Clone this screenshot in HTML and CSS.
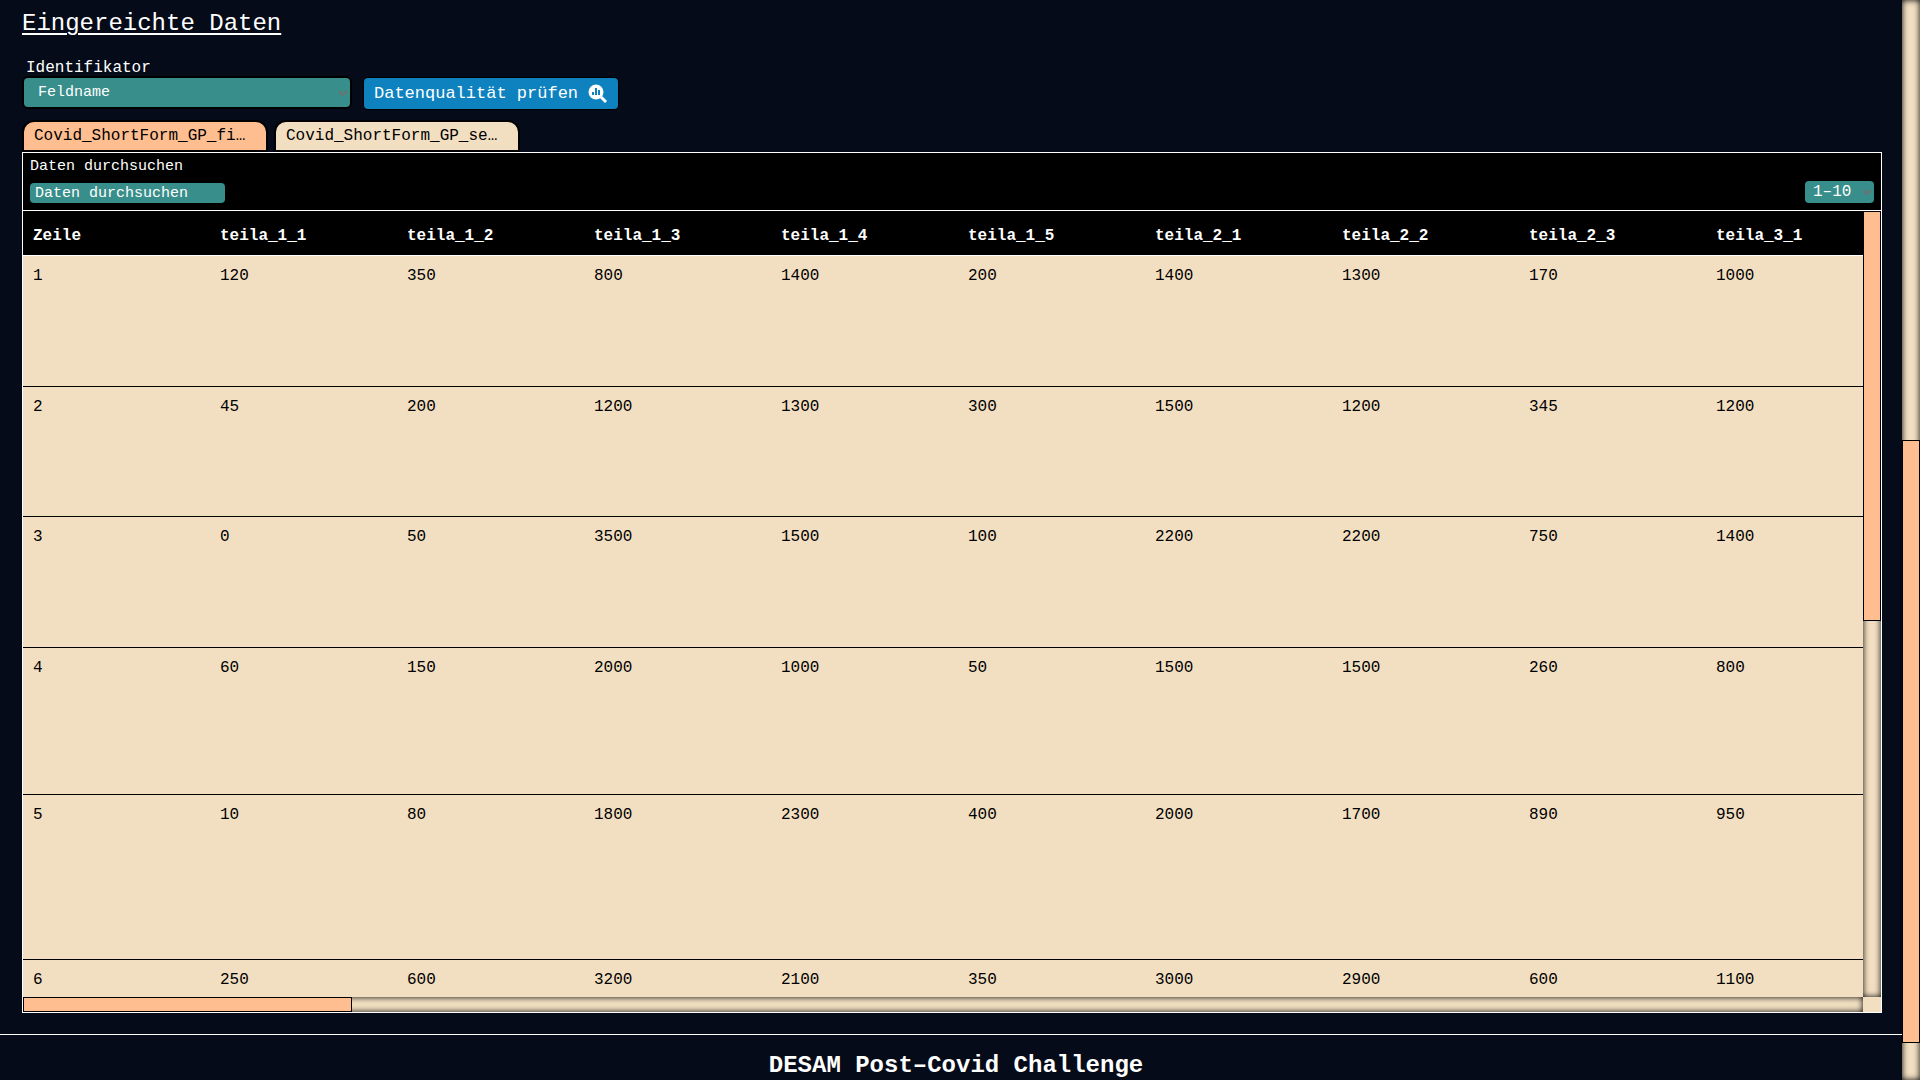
FILE: index.html
```html
<!DOCTYPE html>
<html lang="de">
<head>
<meta charset="utf-8">
<meta name="viewport" content="width=device-width, initial-scale=1">
<title>DESAM Post-Covid Challenge</title>
<link rel="stylesheet" href="styles.css">
</head>
<body>
<div class="page">
  <main class="content">
    <h1 class="title">Eingereichte Daten</h1>

    <form class="toolbar">
      <div class="field">
        <label class="field-label" for="identifier">Identifikator</label>
        <div class="select-wrap">
          <select id="identifier" class="control"><option>Feldname</option></select>
          <svg class="chevron" viewBox="0 0 10 6" aria-hidden="true"><path d="M1 1l4 4 4-4"/></svg>
        </div>
      </div>
      <button class="check-button" type="button">Datenqualität prüfen
        <svg class="check-icon" viewBox="0 0 20 20" aria-hidden="true">
          <path class="handle" d="M13 13l5 5"/>
          <circle class="lens" cx="8" cy="8" r="7.5"/>
          <path class="bars" d="M5 8v3M8 4v7M11 6v5"/>
        </svg>
      </button>
    </form>

    <div class="tabs" role="tablist">
      <button class="tab tab-active" type="button" role="tab" aria-selected="true">Covid_ShortForm_GP_fi…</button>
      <button class="tab" type="button" role="tab" aria-selected="false">Covid_ShortForm_GP_se…</button>
    </div>

    <section class="panel">
      <div class="panel-head">
        <div class="search">
          <label for="search">Daten durchsuchen</label>
          <input id="search" class="control control-small" type="text" placeholder="Daten durchsuchen">
        </div>
        <div class="select-wrap range">
          <select class="control control-small" aria-label="Zeilenbereich"><option>1–10</option></select>
          <svg class="chevron" viewBox="0 0 10 6" aria-hidden="true"><path d="M1 1l4 4 4-4"/></svg>
        </div>
      </div>
      <div class="viewport">
        <div class="table-clip">
          <table class="data">
            <thead>
              <tr><th>Zeile</th><th>teila_1_1</th><th>teila_1_2</th><th>teila_1_3</th><th>teila_1_4</th><th>teila_1_5</th><th>teila_2_1</th><th>teila_2_2</th><th>teila_2_3</th><th>teila_3_1</th></tr>
            </thead>
            <tbody>
              <tr><td>1</td><td>120</td><td>350</td><td>800</td><td>1400</td><td>200</td><td>1400</td><td>1300</td><td>170</td><td>1000</td></tr>
              <tr><td>2</td><td>45</td><td>200</td><td>1200</td><td>1300</td><td>300</td><td>1500</td><td>1200</td><td>345</td><td>1200</td></tr>
              <tr><td>3</td><td>0</td><td>50</td><td>3500</td><td>1500</td><td>100</td><td>2200</td><td>2200</td><td>750</td><td>1400</td></tr>
              <tr class="row-tall"><td>4</td><td>60</td><td>150</td><td>2000</td><td>1000</td><td>50</td><td>1500</td><td>1500</td><td>260</td><td>800</td></tr>
              <tr class="row-taller"><td>5</td><td>10</td><td>80</td><td>1800</td><td>2300</td><td>400</td><td>2000</td><td>1700</td><td>890</td><td>950</td></tr>
              <tr><td>6</td><td>250</td><td>600</td><td>3200</td><td>2100</td><td>350</td><td>3000</td><td>2900</td><td>600</td><td>1100</td></tr>
            </tbody>
          </table>
        </div>
        <div class="track track-y" aria-hidden="true"><div class="thumb thumb-table-y"></div></div>
        <div class="track" aria-hidden="true"><div class="thumb thumb-table-x"></div></div>
        <div class="corner"></div>
      </div>
    </section>
  </main>
  <footer class="footer">DESAM Post–Covid Challenge</footer>
</div>
<div class="track track-page" aria-hidden="true"><div class="thumb thumb-page"></div></div>
</body>
</html>
```
FILE: styles.css
```css
* { box-sizing: border-box; }

body {
  margin: 0;
  height: 100vh;
  overflow: hidden;
  display: grid;
  grid-template-columns: minmax(0, 1fr) 18px;
  grid-template-rows: 100vh;
  background: #050b18;
  color: #fff;
  font: 16px/20px "Liberation Mono", "DejaVu Sans Mono", monospace;
}

button, input, select { font: inherit; color: inherit; margin: 0; }

.page { overflow: hidden; }

.content { padding: 9px 20px 21px 22px; }

.title {
  margin: 0;
  font-size: 24px;
  line-height: 30px;
  font-weight: 400;
  text-decoration: underline;
  text-decoration-thickness: 2px;
  text-underline-offset: 3px;
}

.toolbar {
  display: flex;
  align-items: flex-end;
  gap: 14px;
  margin: 19px 0 0 2px;
}

.field { width: 326px; display: flex; flex-direction: column; padding-bottom: 2px; }
.field-label { padding-left: 2px; }

.select-wrap { display: grid; align-items: center; }
.select-wrap > * { grid-area: 1 / 1; }

.control {
  appearance: none;
  width: 100%;
  height: 29px;
  padding: 1px 14px 0;
  border: 0;
  border-radius: 4px;
  background: #388e8a;
  font-size: 15px;
  line-height: 20px;
  box-shadow: 0 0 0 2px #000;
}
.control-small { height: 20px; padding: 1px 5px 0; box-shadow: none; }
.control::placeholder { color: #fff; opacity: 1; }

.chevron {
  justify-self: end;
  width: 10px;
  height: 6px;
  margin-right: 2px;
  fill: none;
  stroke: #6d7373;
  stroke-width: 2;
  z-index: 1;
  pointer-events: none;
}

.check-button {
  display: flex;
  align-items: center;
  gap: 10px;
  height: 31px;
  padding: 0 10px;
  border: 0;
  border-radius: 4px;
  background: #0d82bf;
  box-shadow: 0 0 0 1px #000;
  font-size: 17px;
  white-space: nowrap;
}
.check-icon { width: 20px; height: 20px; }
.handle { fill: none; stroke: #fff; stroke-width: 3; }
.lens { fill: #fff; }
.bars { fill: none; stroke: #0d82bf; stroke-width: 2; }

.tabs { display: flex; gap: 10px; margin: 13px 0 0 2px; }
.tab {
  width: 242px;
  height: 28px;
  padding: 0 10px;
  border: 0;
  border-radius: 10px 10px 0 0;
  background: #f2dfc2;
  color: #000;
  text-align: left;
  white-space: nowrap;
  box-shadow: 0 0 0 2px #000;
}
.tab-active { background: #ffbe90; }

.panel { margin-top: 2px; border: 1px solid #fff; background: #000; }
.panel-head {
  display: flex;
  justify-content: space-between;
  align-items: flex-end;
  padding: 4px 7px 7px;
  border-bottom: 1px solid #fff;
}
.search { width: 195px; display: flex; flex-direction: column; gap: 6px; font-size: 15px; }
.range { width: 69px; }
.range .control { height: 22px; padding: 0 8px; font-size: 16px; }

.viewport {
  display: grid;
  grid-template-columns: minmax(0, 1fr) 18px;
  grid-template-rows: calc(100vh - 294px) 15px;
}
.table-clip { overflow: hidden; background: #f2dfc2; }

.data {
  width: 1870px;
  table-layout: fixed;
  border-collapse: separate;
  border-spacing: 0;
  color: #000;
}
.data th, .data td { padding: 10px 10px 0; text-align: left; vertical-align: top; }
.data th {
  height: 45px;
  padding: 6px 10px 0;
  vertical-align: middle;
  background: #000;
  color: #fff;
  border-bottom: 1px solid #fff;
}
.data td { height: 131px; border-bottom: 1px solid #000; }
.data tr:nth-child(2) td { height: 130px; }
.data .row-tall td { height: 147px; }
.data .row-taller td { height: 165px; }

.track { background: #f2dfc2; box-shadow: inset 0 0 6px #000; }
.thumb { background: #ffbe90; border: 1px solid #000; }
.thumb-table-y { height: 52.2%; }
.thumb-table-x { width: 17.9%; height: 100%; }
.track-page { display: grid; grid-template-rows: 440fr 603fr 37fr; }
.thumb-page { grid-row: 2; }
.corner { background: #f2dfc2; }

.footer {
  height: 60px;
  border-top: 1px solid #fff;
  padding: 16px 0 0 10px;
  font-size: 24px;
  line-height: 30px;
  font-weight: 700;
  text-align: center;
}
```
